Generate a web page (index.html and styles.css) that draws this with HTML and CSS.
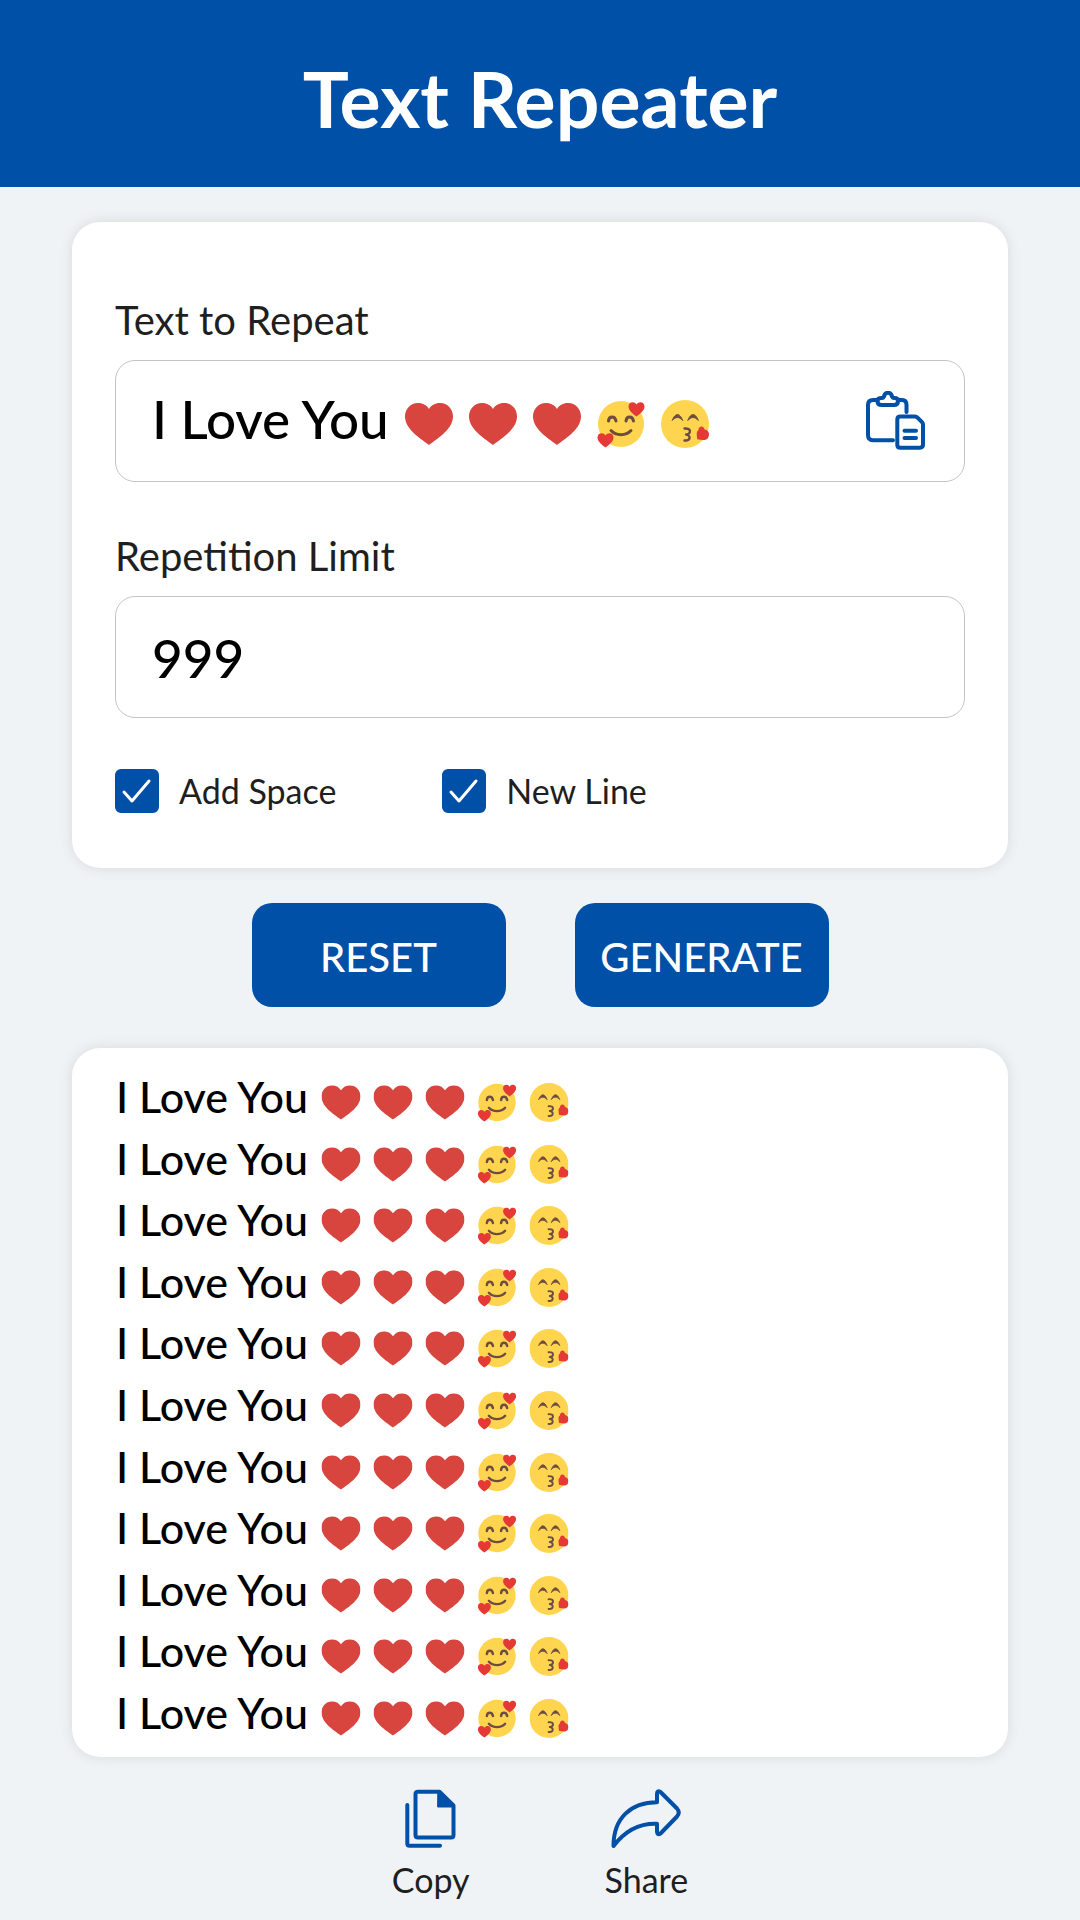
FILE: index.html
```html
<!DOCTYPE html>
<html lang="en">
<head>
    <meta charset="UTF-8">
    <meta name="viewport" content="width=device-width, initial-scale=1.0">
    <title>Text Repeater</title>
    <link rel="stylesheet" href="styles.css">
</head>
<body>
    <!-- Shared emoji row -->
    <svg class="sprite" aria-hidden="true">
        <symbol id="heart" viewBox="0 0 48 48">
            <path fill="#d8443e" d="M24 45C18 40 0 30 0 16.500C0 9 5.500 3 13 3c5 0 9 2.500 11 6c2-3.500 6-6 11-6c7.500 0 13 6 13 13.500C48 30 30 40 24 45z"/>
        </symbol>
        <symbol id="loveFace" viewBox="0 0 48 48">
            <circle cx="24" cy="24" r="23" fill="#ffd54f"/>
            <path d="M11.500 21c.5-5.500 6.500-5.500 7.500 0M29 21c.5-5.500 6.500-5.500 7.500 0M14 30.500c5 5.500 15 5.500 20 0" fill="none" stroke="#6d4c41" stroke-width="3" stroke-linecap="round"/>
            <path fill="#e53935" d="M39.500 16.500C36 14 31.500 10.500 31.500 6.500C31.500 1.500 37.500 1 39.500 4.500C41.500 1 47.500 1.500 47.500 6.500C47.500 10.500 43 14 39.500 16.500z"/>
            <path fill="#e53935" d="M8.500 47.500C5 45 .5 41.500 .5 37.500C.5 32.500 6.500 32 8.500 35.500C10.500 32 16.500 32.500 16.500 37.500C16.500 41.500 12 45 8.500 47.500z"/>
        </symbol>
        <symbol id="kissFace" viewBox="0 0 48 48">
            <circle cx="24" cy="24" r="24" fill="#ffd54f"/>
            <path d="M11.200 20.500c3-8 7.500-8 10.500 0c-3.500-4-7-4-10.500 0zM26.800 20.500c3-8 7.500-8 10.500 0c-3.500-4-7-4-10.500 0z" fill="#6d4c41" stroke="#6d4c41" stroke-width="1" stroke-linejoin="round"/>
            <path d="M23.500 28.500c7.500-.5 6.500 5.500 1.500 6c5 .5 5 6.500-1.500 6" fill="none" stroke="#6d4c41" stroke-width="2.400" stroke-linecap="round" stroke-linejoin="round"/>
            <path fill="#e53935" d="M36.300 39.200C35.700 35 35 31.500 37.500 30C37.500 26 42.500 25 43.700 29.500C47.500 30 49.500 34 46.700 38.500C44 41 40 39.800 36.300 39.200z"/>
        </symbol>
        <symbol id="emojis" viewBox="0 0 304 48">
            <use href="#heart" width="48" height="48"/>
            <use href="#heart" x="64" width="48" height="48"/>
            <use href="#heart" x="128" width="48" height="48"/>
            <use href="#loveFace" x="192" width="48" height="48"/>
            <use href="#kissFace" x="256" width="48" height="48"/>
        </symbol>
    </svg>

    <header class="header">
        <h1>Text Repeater</h1>
    </header>

    <main class="container">
        <!-- Repeater Form -->
        <form class="card form" id="repeaterForm">
            <label class="field-label" for="repeatText">Text to Repeat</label>
            <div class="field">
                <input class="text-input" type="text" id="repeatText" name="repeatText" value="I Love You" size="9">
                <svg class="emojis"><use href="#emojis"/></svg>
                <button class="icon-button" type="button" aria-label="Paste">
                    <svg class="icon paste-icon" viewBox="0 0 60 60">
                        <path d="M11.500 9H7q-5 0-5 5v30q0 5.300 5 5.300h20M33 9h3q4.500 0 4.500 5v7"/>
                        <path d="M15.500 7h.5c1 0 1.500-.5 2-1.500c1-5 7-5 8 0c.5 1 1 1.500 2 1.500h.5q3.500 0 3.500 3q0 4-4 4H15.500q-4 0-4-4q0-3 4-3z"/>
                        <path d="M34.300 25.600H49q1.500 0 2.500 1l4.500 4.500q1 1 1 2.500v20q0 3.100-3 3.100H34.300q-3 0-3-3v-25q0-3.100 3-3.100zM38.500 39.700H50M38.500 47H50"/>
                    </svg>
                </button>
            </div>

            <label class="field-label" for="limit">Repetition Limit</label>
            <div class="field">
                <input class="text-input wide" type="text" inputmode="numeric" id="limit" name="limit" value="999">
            </div>

            <div class="options">
                <label class="option"><input type="checkbox" name="addSpace" checked> Add Space</label>
                <label class="option"><input type="checkbox" name="newLine" checked> New Line</label>
            </div>
        </form>

        <div class="buttons">
            <button class="btn" type="reset" form="repeaterForm">RESET</button>
            <button class="btn" type="button">GENERATE</button>
        </div>

        <!-- Result -->
        <section class="card output">
            <p>I Love You <svg class="emojis"><use href="#emojis"/></svg></p>
            <p>I Love You <svg class="emojis"><use href="#emojis"/></svg></p>
            <p>I Love You <svg class="emojis"><use href="#emojis"/></svg></p>
            <p>I Love You <svg class="emojis"><use href="#emojis"/></svg></p>
            <p>I Love You <svg class="emojis"><use href="#emojis"/></svg></p>
            <p>I Love You <svg class="emojis"><use href="#emojis"/></svg></p>
            <p>I Love You <svg class="emojis"><use href="#emojis"/></svg></p>
            <p>I Love You <svg class="emojis"><use href="#emojis"/></svg></p>
            <p>I Love You <svg class="emojis"><use href="#emojis"/></svg></p>
            <p>I Love You <svg class="emojis"><use href="#emojis"/></svg></p>
            <p>I Love You <svg class="emojis"><use href="#emojis"/></svg></p>
        </section>

        <div class="actions">
            <button class="action" type="button">
                <svg class="icon copy-icon" viewBox="0 0 52 60">
                    <path d="M13 2.700H34.500L48.500 16.500V46q0 2.500-2.500 2.500H13q-2.500 0-2.500-2.500V5q0-2.300 2.500-2.300zM2.300 16V54.500q0 2.200 2.200 2.200H35"/>
                    <path class="fold" d="M33 2.700L48.500 18H33z"/>
                </svg>
                Copy
            </button>
            <button class="action" type="button">
                <svg class="icon share-icon" viewBox="0 0 70 60">
                    <path d="M2.500 57C2.500 29 20 13.300 46 13.300V5q0-4 3.500-2L66 19.500q3.500 4 0 8L49.500 44.500q-3.500 2-3.500-2V34.700C27 34 13 43 2.500 57z"/>
                </svg>
                Share
            </button>
        </div>
    </main>
</body>
</html>
```
FILE: styles.css
```css
* {
    box-sizing: border-box;
}
body {
    margin: 0;
    font-family: Lato, sans-serif;
    background-color: #eff3f6;
    color: #1f1f1f;
}
.sprite {
    display: none;
}
.header {
    padding: 51px 20px 42px;
    background-color: #0050a7; /* Dark blue bar */
    color: #fff;
    text-align: center;
}
h1 {
    margin: 0;
    font-size: 77px;
    line-height: 94px;
    font-weight: 700;
}
.container {
    padding: 35px 72px 12px;
}
.card {
    background-color: #fff;
    border-radius: 28px;
    box-shadow: 0 0 14px rgba(0,0,0,0.1);
}
.form {
    padding: 74px 43px 55px;
}
.field-label {
    display: block;
    margin-bottom: 16px;
    font-size: 40px;
    line-height: 48px;
}
.field {
    display: flex;
    align-items: center;
    height: 122px;
    padding: 0 38px 0 36px;
    border: 1px solid #c4c4c4;
    border-radius: 20px;
}
.field + .field-label {
    margin-top: 50px;
}
.text-input {
    field-sizing: content;
    height: 64px;
    margin-bottom: 6px;
    padding: 0;
    border: none;
    outline: none;
    background: none;
    font-family: inherit;
    font-size: 53px;
    font-weight: 500;
    color: #000;
}
.text-input.wide {
    field-sizing: fixed;
    width: 100%;
    margin-bottom: 0;
}
.emojis {
    flex: none;
}
.field .emojis {
    width: 304px;
    height: 48px;
    margin: 6px 0 0 16px;
}
.icon {
    display: block;
    fill: none;
    stroke: #0050a7;
    stroke-width: 4;
    stroke-linecap: round;
    stroke-linejoin: round;
}
.icon-button {
    margin-left: auto;
    padding: 0;
    border: none;
    background: none;
    cursor: pointer;
}
.paste-icon {
    width: 60px;
    height: 60px;
}
.options {
    display: flex;
    gap: 106px;
    margin-top: 51px;
}
.option {
    display: flex;
    align-items: center;
    gap: 20px;
    font-size: 34px;
    line-height: 44px;
}
.option input {
    appearance: none;
    width: 44px;
    height: 44px;
    margin: 0;
    border: 2px solid #0050a7;
    border-radius: 6px;
}
.option input:checked {
    background: #0050a7 url("data:image/svg+xml,%3Csvg xmlns='http://www.w3.org/2000/svg' viewBox='0 0 40 40'%3E%3Cpath d='M7 21l8 9L32 10' fill='none' stroke='white' stroke-width='3' stroke-linecap='round' stroke-linejoin='round'/%3E%3C/svg%3E") center / 40px no-repeat;
}
.buttons {
    display: flex;
    justify-content: center;
    gap: 69px;
    margin: 35px 0 41px;
}
.btn {
    width: 254px;
    height: 104px;
    padding: 4px 0 0;
    border: none;
    border-radius: 20px;
    background-color: #0050a7;
    color: #fff;
    font-family: inherit;
    font-size: 40px;
    font-weight: 500;
    cursor: pointer;
}
.btn:hover {
    background-color: #00438c;
}
.output {
    display: flex;
    flex-direction: column;
    justify-content: space-between;
    min-height: 709px;
    padding: 23px 44px 18px;
    color: #000;
    font-size: 43px;
    line-height: 52px;
    font-weight: 500;
}
.output p {
    display: flex;
    align-items: flex-end;
    gap: 13px;
    margin: 0;
}
.output .emojis {
    width: 248px;
    height: 39px;
    margin-bottom: 1px;
}
.actions {
    display: flex;
    justify-content: center;
    gap: 135px;
    margin-top: 32px;
}
.action {
    display: flex;
    flex-direction: column;
    align-items: center;
    gap: 10px;
    padding: 0;
    border: none;
    background: none;
    color: #1f1f1f;
    font-family: inherit;
    font-size: 34px;
    line-height: 42px;
    cursor: pointer;
}
.copy-icon {
    width: 52px;
    height: 60px;
}
.share-icon {
    width: 70px;
    height: 60px;
}
.fold {
    fill: #0050a7;
    stroke-width: 1;
}
```
